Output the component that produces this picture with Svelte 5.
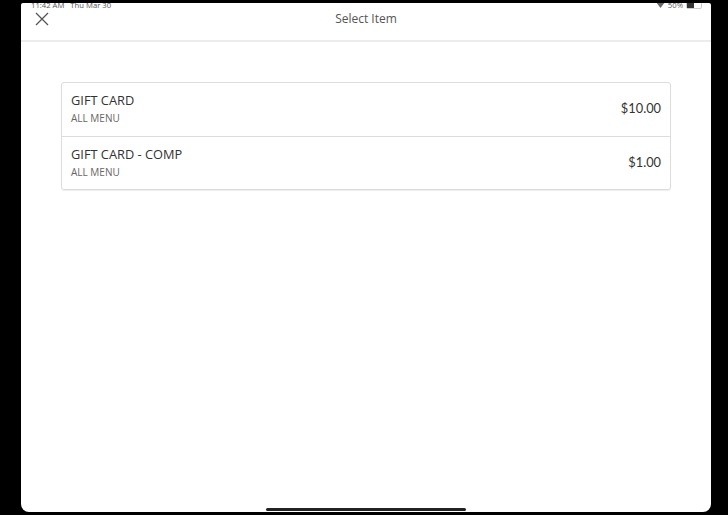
<script>
    const items = [
        { name: 'GIFT CARD', menu: 'ALL MENU', price: '$10.00' },
        { name: 'GIFT CARD - COMP', menu: 'ALL MENU', price: '$1.00' }
    ];
</script>

<div class="page">
    <div class="screen">
        <div class="status">
            <span class="time">11:42 AM&nbsp;&nbsp;&nbsp;Thu Mar 30</span>
            <span class="system">
                <svg width="9" height="6" viewBox="0 0 9 6"><path d="M0 0 H9 L4.5 6 Z" fill="#666" /></svg>
                <span>50%</span>
                <span class="battery"><span class="level"></span></span>
            </span>
        </div>
        <header>
            <svg class="close" width="14" height="14" viewBox="0 0 14 14">
                <path d="M1 1 L13 13 M13 1 L1 13" stroke="#555" stroke-width="1.3" fill="none" />
            </svg>
            <span class="title">Select Item</span>
        </header>
        <main>
            <ul>
                {#each items as item}
                    <li>
                        <div>
                            <div class="name">{item.name}</div>
                            <div class="menu">{item.menu}</div>
                        </div>
                        <div class="price">{item.price}</div>
                    </li>
                {/each}
            </ul>
        </main>
        <div class="home"></div>
    </div>
</div>

<style>
    :global(body) {
        background: #000;
    }

    .page {
        width: 728px;
        height: 515px;
        padding: 3px 17px 3px 21px;
        box-sizing: border-box;
        background: #000;
        overflow: hidden;
    }

    .screen {
        position: relative;
        height: 509px;
        background: #fff;
        border-radius: 2px 2px 8px 8px;
        font-family: "Open Sans", sans-serif;
        color: #3a3a3a;
        display: flex;
        flex-direction: column;
        overflow: hidden;
    }

    .status {
        position: absolute;
        top: -3px;
        left: 10px;
        right: 9px;
        display: flex;
        justify-content: space-between;
        font-size: 7.7px;
        line-height: 10px;
        color: #555;
    }

    .system {
        display: flex;
        align-items: center;
        gap: 3px;
    }

    .battery {
        width: 14px;
        height: 6px;
        border: 1px solid #ccc;
        border-radius: 2px;
        display: block;
    }

    .level {
        display: block;
        width: 7px;
        height: 6px;
        background: #333;
    }

    header {
        height: 37px;
        flex: none;
        border-bottom: 2px solid #ececec;
        display: flex;
        align-items: center;
        justify-content: center;
        position: relative;
    }

    .close {
        position: absolute;
        left: 14px;
        top: 9px;
    }

    .title {
        font-size: 12px;
        color: #555;
        position: relative;
        top: -3px;
    }

    main {
        padding: 40px 40px 0;
    }

    ul {
        list-style: none;
        margin: 0;
        padding: 0;
        border: 1px solid #dcdcdc;
        border-radius: 3px;
        box-shadow: 0 1px 1px #eee;
    }

    li {
        height: 53px;
        padding: 0 9px;
        display: flex;
        align-items: center;
        justify-content: space-between;
    }

    li + li {
        box-sizing: border-box;
        border-top: 1px solid #dcdcdc;
        padding-top: 2px;
    }

    .name {
        font-size: 12.8px;
        line-height: 16px;
        color: #333;
        margin-top: -2px;
    }

    .menu {
        font-size: 10px;
        line-height: 12px;
        margin-top: 4px;
        margin-bottom: 2px;
        color: #666;
    }

    .price {
        font-family: Lato, sans-serif;
        font-size: 12.8px;
        color: #333;
        margin-top: -4px;
    }

    .home {
        position: absolute;
        left: 245px;
        bottom: 1px;
        width: 200px;
        height: 3px;
        border-radius: 2px;
        background: #222;
    }
</style>
